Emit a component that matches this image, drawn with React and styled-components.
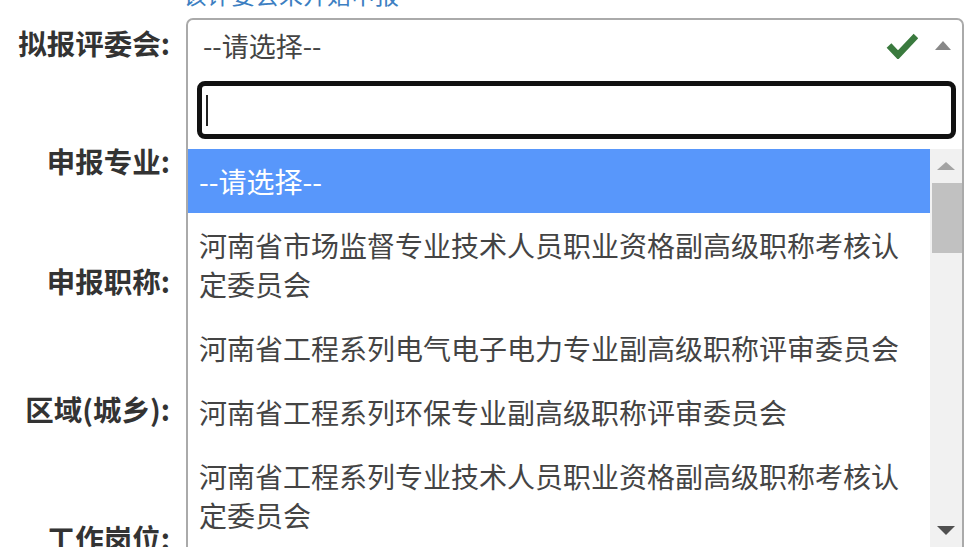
import React from 'react';
import styled, { createGlobalStyle } from 'styled-components';

const GlobalStyle = createGlobalStyle`
  html, body {
    margin: 0;
    padding: 0;
    background: #fff;
    overflow: hidden;
  }
  body {
    font-family: "Noto Sans CJK SC", "Noto Sans", sans-serif;
  }
`;

const committees = [
  '--请选择--',
  '河南省市场监督专业技术人员职业资格副高级职称考核认定委员会',
  '河南省工程系列电气电子电力专业副高级职称评审委员会',
  '河南省工程系列环保专业副高级职称评审委员会',
  '河南省工程系列专业技术人员职业资格副高级职称考核认定委员会',
  '河南省工程系列建筑专业副高级职称评审委员会',
];

// 下拉框打开时, 下面几行的选择框被盖住, 所以不显示文字
const rows = [
  { label: '拟报评委会:', gap: 63, open: true, value: '--请选择--' },
  { label: '申报专业:', gap: 65, value: '' },
  { label: '申报职称:', gap: 73, value: '' },
  { label: '区域(城乡):', gap: 74, value: '' },
  { label: '工作岗位:', gap: 0, value: '' },
];

const CheckIcon = () => (
  <svg width="32" height="26" viewBox="0 0 32 26">
    <path d="M3 12.5 L12 22 L30 3" fill="none" stroke="#3a7a3e" strokeWidth="6.5" />
  </svg>
);

const App = () => {
  return (
    <>
      <GlobalStyle />
      <Page>
        <HintRow>
          <Hint>该评委会未开始申报</Hint>
        </HintRow>
        {rows.map((row) => (
          <Row key={row.label} gap={row.gap}>
            <Label>{row.label}</Label>
            <Field>
              <SelectBox open={row.open}>
                <SelectText>{row.value}</SelectText>
                {row.open && <CheckIcon />}
                <Arrow up={row.open} />
              </SelectBox>
              {row.open && (
                <Dropdown>
                  <SearchWrap>
                    <SearchInput>
                      <Caret />
                    </SearchInput>
                  </SearchWrap>
                  <ResultsArea>
                    <Results>
                      {committees.map((name, i) => (
                        <Option key={name} highlighted={i === 0}>{name}</Option>
                      ))}
                    </Results>
                    <ScrollBar>
                      <ScrollButton>
                        <ScrollArrow up dim />
                      </ScrollButton>
                      <ScrollTrack>
                        <Thumb />
                      </ScrollTrack>
                      <ScrollButton>
                        <ScrollArrow />
                      </ScrollButton>
                    </ScrollBar>
                  </ResultsArea>
                </Dropdown>
              )}
            </Field>
          </Row>
        ))}
      </Page>
    </>
  );
};

const Page = styled.div`
  margin-top: -21px;
  display: flex;
  flex-direction: column;
`;
const HintRow = styled.div`
  padding-left: 183px;
  height: 30px;
  margin-bottom: 9px;
`;
const Hint = styled.span`
  font-size: 24px;
  line-height: 30px;
  color: #3d7fc2;
`;
const Row = styled.div`
  display: flex;
  align-items: flex-start;
  gap: 16px;
  margin-bottom: ${(p) => p.gap}px;
`;
const Label = styled.div`
  width: 170px;
  height: 50px;
  line-height: 50px;
  text-align: right;
  font-size: 28.5px;
  font-weight: bold;
  color: #333;
  white-space: nowrap;
`;
const Field = styled.div`
  position: relative;
  width: 778px;
  flex-shrink: 0;
`;
const SelectBox = styled.div`
  box-sizing: border-box;
  height: 55px;
  border: 2px solid #aaa;
  border-radius: ${(p) => (p.open ? '7px 7px 0 0' : '7px')};
  display: flex;
  align-items: center;
  padding: 0 11px 0 15px;
  gap: 17px;
  background: #fff;
`;
const SelectText = styled.span`
  flex: 1;
  font-size: 27px;
  color: #444;
`;
const Arrow = styled.span`
  width: 0;
  height: 0;
  border-left: 8px solid transparent;
  border-right: 8px solid transparent;
  ${(p) => (p.up ? 'border-bottom: 9px solid #888;' : 'border-top: 9px solid #888;')}
`;
const Dropdown = styled.div`
  position: absolute;
  top: 53px;
  left: 0;
  right: 0;
  z-index: 10;
  background: #fff;
  border: 2px solid #aaa;
  border-top: none;
`;
const SearchWrap = styled.div`
  padding: 10px 6px 10px 9px;
`;
const SearchInput = styled.div`
  box-sizing: border-box;
  height: 58px;
  border: 5px solid #111;
  border-radius: 8px;
  display: flex;
  align-items: center;
  padding-left: 4px;
`;
const Caret = styled.span`
  display: inline-block;
  width: 2px;
  height: 31px;
  background: #222;
`;
const ResultsArea = styled.div`
  display: flex;
  height: 398px;
  overflow: hidden;
`;
const Results = styled.ul`
  list-style: none;
  margin: 0;
  padding: 0;
  flex: 1;
`;
const Option = styled.li`
  padding: 12.5px 12px 12.5px 11px;
  font-size: 28px;
  line-height: 39px;
  color: ${(p) => (p.highlighted ? '#fff' : '#444')};
  background: ${(p) => (p.highlighted ? '#5897fb' : '#fff')};
`;
const ScrollBar = styled.div`
  width: 32px;
  background: #f1f1f1;
  display: flex;
  flex-direction: column;
`;
const ScrollButton = styled.div`
  height: 34px;
  display: flex;
  align-items: center;
  justify-content: center;
`;
const ScrollArrow = styled.span`
  width: 0;
  height: 0;
  border-left: 9px solid transparent;
  border-right: 9px solid transparent;
  ${(p) =>
    p.up
      ? `border-bottom: 8px solid ${p.dim ? '#a3a3a3' : '#505050'};`
      : `border-top: 9px solid ${p.dim ? '#a3a3a3' : '#505050'};`}
`;
const ScrollTrack = styled.div`
  flex: 1;
  padding-left: 2px;
`;
const Thumb = styled.div`
  height: 70px;
  background: #c1c1c1;
`;

export default App;
